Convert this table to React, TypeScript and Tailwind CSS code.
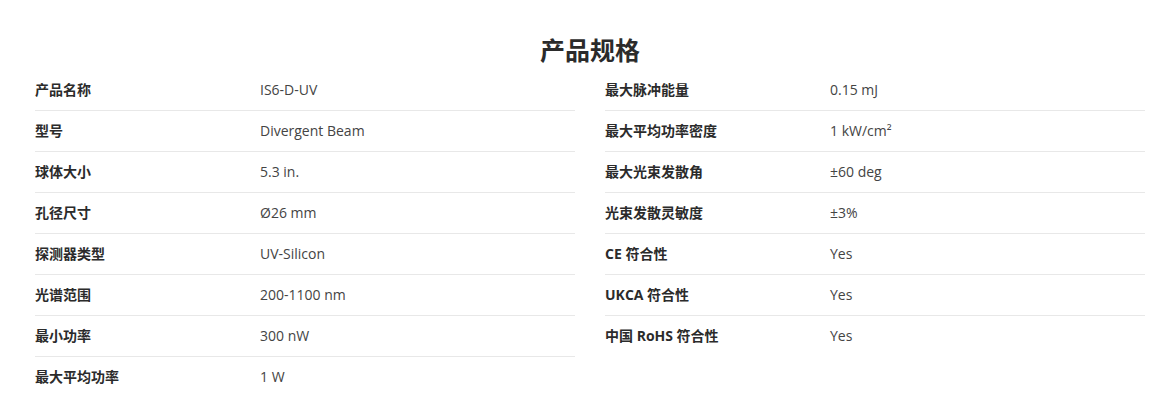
import React from 'react';

const left: [string, string][] = [
  ['产品名称', 'IS6-D-UV'],
  ['型号', 'Divergent Beam'],
  ['球体大小', '5.3 in.'],
  ['孔径尺寸', 'Ø26 mm'],
  ['探测器类型', 'UV-Silicon'],
  ['光谱范围', '200-1100 nm'],
  ['最小功率', '300 nW'],
  ['最大平均功率', '1 W'],
];

const right: [string, string][] = [
  ['最大脉冲能量', '0.15 mJ'],
  ['最大平均功率密度', '1 kW/cm²'],
  ['最大光束发散角', '±60 deg'],
  ['光束发散灵敏度', '±3%'],
  ['CE 符合性', 'Yes'],
  ['UKCA 符合性', 'Yes'],
  ['中国 RoHS 符合性', 'Yes'],
];

const SpecList = ({ rows }: { rows: [string, string][] }) => (
  <div className="flex flex-col">
    {rows.map(([label, value], i) => (
      <div
        key={label}
        className={`grid grid-cols-[225px_1fr] py-[10px] text-[14px] leading-[20px] ${
          i < rows.length - 1 ? 'border-b border-[#e8e8e8]' : ''
        }`}
      >
        <span className="font-bold text-[#2b2b2b]">{label}</span>
        <span className="text-[#444]">{value}</span>
      </div>
    ))}
  </div>
);

export default function App() {
  return (
    <div className="bg-white min-h-[412px] font-['Open_Sans','Noto_Sans_CJK_SC',sans-serif]">
      <div className="w-[1110px] ml-[35px] pt-[34px]">
        <h2 className="text-center text-[25px] leading-[32px] font-bold text-[#2b2b2b] mb-[4px]">产品规格</h2>
        <div className="grid grid-cols-2 gap-x-[30px]">
          <SpecList rows={left} />
          <SpecList rows={right} />
        </div>
      </div>
    </div>
  );
}
